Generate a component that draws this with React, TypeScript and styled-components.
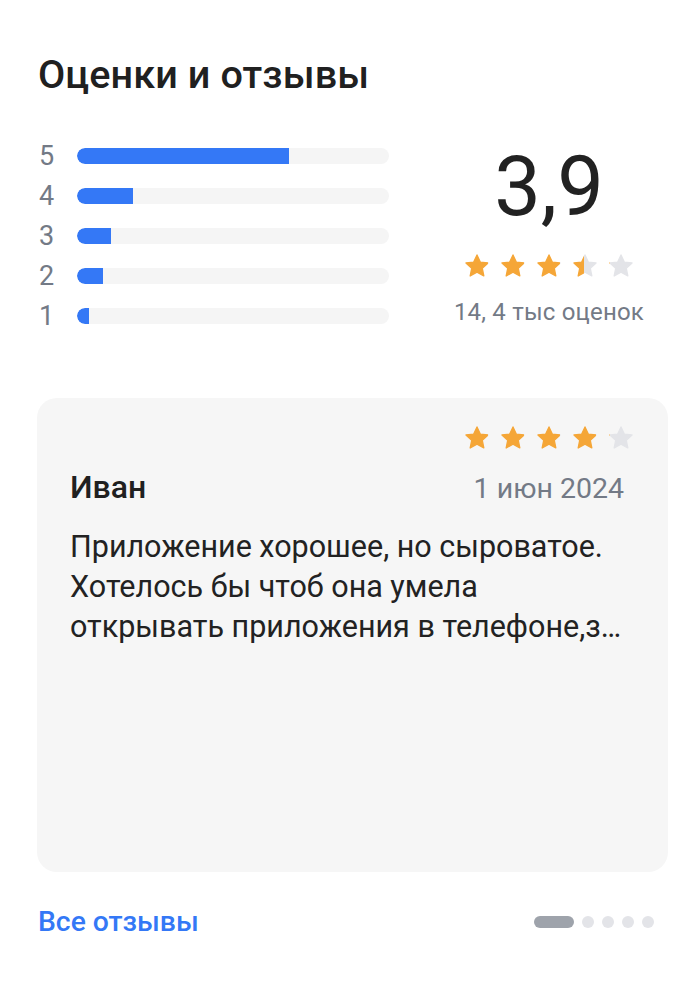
import React from "react";
import styled, { createGlobalStyle } from "styled-components";

const Global = createGlobalStyle`
  html, body { margin: 0; padding: 0; background: #fff; }
  body { font-family: Roboto, "Noto Sans", Arial, sans-serif; }
`;

const Page = styled.div`
  width: 686px;
  box-sizing: border-box;
  padding: 50px 18px 0 37px;
  display: flex;
  flex-direction: column;
`;

const Title = styled.h1`
  margin: 0 0 0 1px;
  font-size: 39.6px;
  font-weight: 500;
  color: #202020;
  line-height: 50px;
  letter-spacing: 0.1px;
`;

const Summary = styled.div`
  display: flex;
  margin-top: 44px;
`;

const Bars = styled.div`
  display: flex;
  flex-direction: column;
  gap: 16px;
  width: 352px;
`;

const BarRow = styled.div`
  display: flex;
  align-items: center;
  height: 24px;
`;

const BarLabel = styled.span`
  width: 40px;
  font-size: 27px;
  color: #737a86;
  line-height: 24px;
  padding-left: 2px;
  box-sizing: border-box;
`;

const Track = styled.div`
  flex: 1;
  height: 16px;
  border-radius: 8px;
  background: #f5f5f5;
  overflow: hidden;
`;

const Fill = styled.div`
  height: 100%;
  background: #3478f6;
  border-radius: 8px 0 0 8px;
`;

const Score = styled.div`
  flex: 1;
  display: flex;
  flex-direction: column;
  align-items: center;
  padding-left: 41px;
`;

const Big = styled.div`
  font-size: 83px;
  line-height: 82px;
  color: #222;
  margin-top: 2px;
`;

const StarsRow = styled.div<{ $mt: number }>`
  display: flex;
  gap: 10px;
  margin-top: ${(p) => p.$mt}px;
`;

const Count = styled.div`
  margin-top: 19px;
  font-size: 24px;
  line-height: 28px;
  color: #737a86;
  letter-spacing: 0.2px;
`;

const Card = styled.div`
  margin-top: 70px;
  width: 631px;
  height: 474px;
  box-sizing: border-box;
  background: #f6f6f6;
  border-radius: 20px;
  padding: 27px 34px 0 33px;
  display: flex;
  flex-direction: column;
`;

const CardStars = styled.div`
  display: flex;
  justify-content: flex-end;
`;

const Head = styled.div`
  display: flex;
  justify-content: space-between;
  align-items: baseline;
  margin-top: 18px;
  padding-right: 10px;
`;

const Name = styled.span`
  font-size: 32px;
  line-height: 36px;
  font-weight: 500;
  color: #202020;
`;

const DateText = styled.span`
  font-size: 28.5px;
  color: #737a86;
`;

const Body = styled.p`
  margin: 22px 0 0;
  font-size: 30.5px;
  line-height: 40px;
  color: #222;
  white-space: pre-line;
`;

const Footer = styled.div`
  display: flex;
  justify-content: space-between;
  align-items: center;
  margin-top: 33px;
  padding-right: 14px;
`;

const AllLink = styled.a`
  font-size: 28.3px;
  line-height: 33px;
  font-weight: 500;
  color: #3478f6;
  text-decoration: none;
  margin-left: 1px;
`;

const Dots = styled.div`
  display: flex;
  gap: 8px;
  align-items: center;
`;

const Dot = styled.span<{ $active?: boolean }>`
  height: 12px;
  width: ${(p) => (p.$active ? 40 : 12)}px;
  border-radius: 6px;
  background: ${(p) => (p.$active ? "#9ea3ab" : "#e3e4e8")};
`;

const STAR =
  "M12 1.8l3.05 6.55 7.15.85-5.3 4.9 1.4 7.1L12 17.65 5.7 21.2l1.4-7.1-5.3-4.9 7.15-.85z";

let gid = 0;
function Star({ fill }: { fill: number }) {
  const id = React.useMemo(() => `s${gid++}`, []);
  return (
    <svg width="26" height="26" viewBox="0 0 24 24">
      <defs>
        <linearGradient id={id} x1="0" x2="1" y1="0" y2="0">
          <stop offset={fill} stopColor="#f5a637" />
          <stop offset={fill} stopColor="#e3e4e8" />
        </linearGradient>
      </defs>
      <path d={STAR} fill={`url(#${id})`} stroke={`url(#${id})`} strokeWidth="1.2" strokeLinejoin="round" />
    </svg>
  );
}

function Stars({ value, mt = 0 }: { value: number; mt?: number }) {
  return (
    <StarsRow $mt={mt}>
      {[0, 1, 2, 3, 4].map((i) => (
        <Star key={i} fill={Math.max(0, Math.min(1, value - i))} />
      ))}
    </StarsRow>
  );
}

const bars = [
  { n: 5, v: 68 },
  { n: 4, v: 18 },
  { n: 3, v: 11 },
  { n: 2, v: 8.3 },
  { n: 1, v: 4 },
];

const reviewText =
  "Приложение хорошее, но сыроватое.\nХотелось бы чтоб она умела\nоткрывать приложения в телефоне,з…";

export default function App() {
  return (
    <>
      <Global />
      <Page>
        <Title>Оценки и отзывы</Title>
        <Summary>
          <Bars>
            {bars.map((b) => (
              <BarRow key={b.n}>
                <BarLabel>{b.n}</BarLabel>
                <Track>
                  <Fill style={{ width: `${b.v}%` }} />
                </Track>
              </BarRow>
            ))}
          </Bars>
          <Score>
            <Big>3,9</Big>
            <Stars value={3.45} mt={25} />
            <Count>14, 4 тыс оценок</Count>
          </Score>
        </Summary>
        <Card>
          <CardStars>
            <Stars value={4} />
          </CardStars>
          <Head>
            <Name>Иван</Name>
            <DateText>1 июн 2024</DateText>
          </Head>
          <Body>{reviewText}</Body>
        </Card>
        <Footer>
          <AllLink href="#">Все отзывы</AllLink>
          <Dots>
            <Dot $active />
            <Dot />
            <Dot />
            <Dot />
            <Dot />
          </Dots>
        </Footer>
      </Page>
    </>
  );
}
